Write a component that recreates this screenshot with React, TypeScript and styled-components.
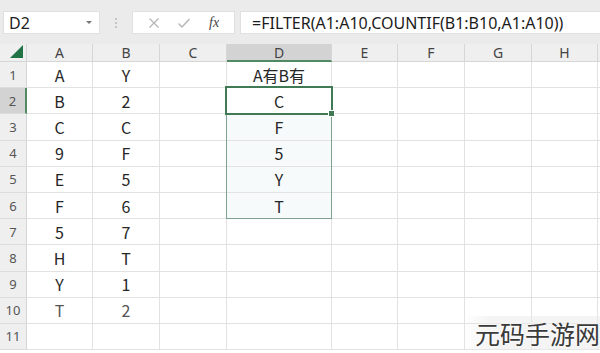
import React from "react";
import styled, { createGlobalStyle } from "styled-components";

const GlobalStyle = createGlobalStyle`
  html, body {
    margin: 0;
    padding: 0;
    background: #ffffff;
  }
  body {
    font-family: "Noto Sans CJK SC", "Noto Sans", "Liberation Sans", sans-serif;
    overflow: hidden;
  }
`;

const Page = styled.div`
  position: relative;
  width: 600px;
  height: 353px;
  overflow: hidden;
  background: #ffffff;
`;

const Toolbar = styled.div`
  display: flex;
  align-items: flex-end;
  height: 44px;
  padding: 0 0 10px 3px;
  box-sizing: border-box;
  background: #ebebeb;
`;

const Box = styled.div<{ $w: number }>`
  width: ${(p) => p.$w}px;
  height: 23px;
  background: #ffffff;
  border: 1px solid #e0e0e0;
  box-sizing: border-box;
  display: flex;
  align-items: center;
  flex-shrink: 0;
`;

const NameText = styled.span`
  flex: 1;
  padding-left: 5px;
  font-size: 16px;
  color: #222;
  font-family: "Noto Sans", sans-serif;
`;

const Caret = styled.span`
  width: 0;
  height: 0;
  margin-right: 7px;
  border-left: 3px solid transparent;
  border-right: 3px solid transparent;
  border-top: 3px solid #777;
`;

const Grip = styled.div`
  width: 32px;
  height: 23px;
  display: flex;
  flex-direction: column;
  align-items: center;
  justify-content: center;
  gap: 2px;
  flex-shrink: 0;
  span {
    width: 2px;
    height: 2px;
    background: #b8b8b8;
    border-radius: 1px;
  }
`;

const FxBox = styled(Box)`
  justify-content: space-around;
  padding: 0 6px;
`;

const FxLabel = styled.span`
  font-family: "Liberation Serif", serif;
  font-style: italic;
  font-size: 14px;
  color: #444;
`;

const FormulaBox = styled(Box)`
  margin-left: 5px;
  flex: 1;
  border-right: none;
`;

const FormulaText = styled.span`
  padding-left: 11px;
  font-size: 16px;
  color: #1c1c1c;
  font-family: "Noto Sans", sans-serif;
  white-space: nowrap;
`;

const Grid = styled.div`
  position: relative;
  display: grid;
  grid-template-columns: 27px 66px 67px 67px 105px 66px 67px 67px 66px 10px;
  grid-template-rows: 18px repeat(11, 26.2px);
`;

const ColHead = styled.div<{ $active?: boolean }>`
  background: ${(p) => (p.$active ? "#d3d3d3" : "#efefef")};
  border-right: 1px solid #d6d6d6;
  border-bottom: ${(p) => (p.$active ? "2px solid #4f8a63" : "1px solid #d6d6d6")};
  box-sizing: border-box;
  display: flex;
  align-items: center;
  justify-content: center;
  font-size: 14px;
  color: #444;
  font-family: "Noto Sans", sans-serif;
`;

const Corner = styled.div`
  background: #efefef;
  border-right: 1px solid #d6d6d6;
  border-bottom: 1px solid #d6d6d6;
  box-sizing: border-box;
  position: relative;
  &::after {
    content: "";
    position: absolute;
    right: 3px;
    bottom: 3px;
    width: 0;
    height: 0;
    border-left: 13px solid transparent;
    border-bottom: 13px solid #217346;
  }
`;

const RowHead = styled.div<{ $active?: boolean }>`
  background: ${(p) => (p.$active ? "#d3d3d3" : "#efefef")};
  border-right: ${(p) => (p.$active ? "2px solid #4f8a63" : "1px solid #d6d6d6")};
  border-bottom: 1px solid #dcdcdc;
  box-sizing: border-box;
  display: flex;
  align-items: center;
  justify-content: center;
  font-size: 13px;
  color: #555;
  font-family: "Noto Sans", sans-serif;
`;

const Cell = styled.div<{ $tint?: boolean; $faded?: boolean }>`
  background: ${(p) => (p.$tint ? "#f7fafb" : "#ffffff")};
  border-right: 1px solid #e2e2e2;
  border-bottom: 1px solid #e2e2e2;
  box-sizing: border-box;
  display: flex;
  align-items: center;
  justify-content: center;
  font-size: 16px;
  color: ${(p) => (p.$faded ? "#555" : "#262626")};
`;

/* absolutely positioned grid children: they sit over the cells without taking a slot */
const Range = styled.div`
  grid-column: 5 / 6;
  grid-row: 3 / 8;
  position: absolute;
  top: -1px;
  left: -1px;
  right: 0;
  bottom: 0;
  border: 1px solid #7fa290;
  pointer-events: none;
`;

const Active = styled.div`
  grid-column: 5 / 6;
  grid-row: 3 / 4;
  position: absolute;
  top: -2px;
  left: -2px;
  right: -1px;
  bottom: -1px;
  border: 2px solid #3f7a55;
  pointer-events: none;
  &::after {
    content: "";
    position: absolute;
    right: -4px;
    bottom: -4px;
    width: 5px;
    height: 5px;
    background: #3f7a55;
    border: 1px solid #fff;
  }
`;

const Watermark = styled.div`
  position: absolute;
  left: 463px;
  top: 316px;
  padding: 0 0 0 12px;
  font-size: 25px;
  line-height: 34px;
  color: #3a3a3a;
  white-space: nowrap;
  background: linear-gradient(90deg, rgba(235,235,235,0) 0%, rgba(235,235,235,0.55) 20%);
  text-shadow: 0 0 2px #fff, 0 0 3px #fff;
`;

const cols = ["A", "B", "C", "D", "E", "F", "G", "H"];
const colA = ["A", "B", "C", "9", "E", "F", "5", "H", "Y", "T", ""];
const colB = ["Y", "2", "C", "F", "5", "6", "7", "T", "1", "2", ""];
const colD = ["A有B有", "C", "F", "5", "Y", "T", "", "", "", "", ""];

export default function App() {
  return (
    <Page>
      <GlobalStyle />
      <Toolbar>
        <Box $w={97}>
          <NameText>D2</NameText>
          <Caret />
        </Box>
        <Grip>
          <span />
          <span />
          <span />
        </Grip>
        <FxBox $w={103}>
          <svg width="12" height="12" viewBox="0 0 12 12">
            <path d="M1.5 1.5 L10.5 10.5 M10.5 1.5 L1.5 10.5" stroke="#b5b5b5" strokeWidth="1.2" fill="none" />
          </svg>
          <svg width="14" height="12" viewBox="0 0 14 12">
            <path d="M1.5 6.5 L5 10 L12.5 2" stroke="#b5b5b5" strokeWidth="1.4" fill="none" />
          </svg>
          <FxLabel>fx</FxLabel>
        </FxBox>
        <FormulaBox $w={355}>
          <FormulaText>=FILTER(A1:A10,COUNTIF(B1:B10,A1:A10))</FormulaText>
        </FormulaBox>
      </Toolbar>
      <Grid>
        <Corner />
        {cols.map((c) => (
          <ColHead key={c} $active={c === "D"}>
            {c}
          </ColHead>
        ))}
        <ColHead />
        {colA.map((a, i) => (
          <React.Fragment key={i}>
            <RowHead $active={i === 1}>{i + 1}</RowHead>
            <Cell $faded={i === 9}>{a}</Cell>
            <Cell $faded={i === 9}>{colB[i]}</Cell>
            <Cell />
            <Cell $tint={i >= 2 && i <= 5}>{colD[i]}</Cell>
            <Cell />
            <Cell />
            <Cell />
            <Cell />
            <Cell />
          </React.Fragment>
        ))}
        <Range />
        <Active />
      </Grid>
      <Watermark>元码手游网</Watermark>
    </Page>
  );
}
